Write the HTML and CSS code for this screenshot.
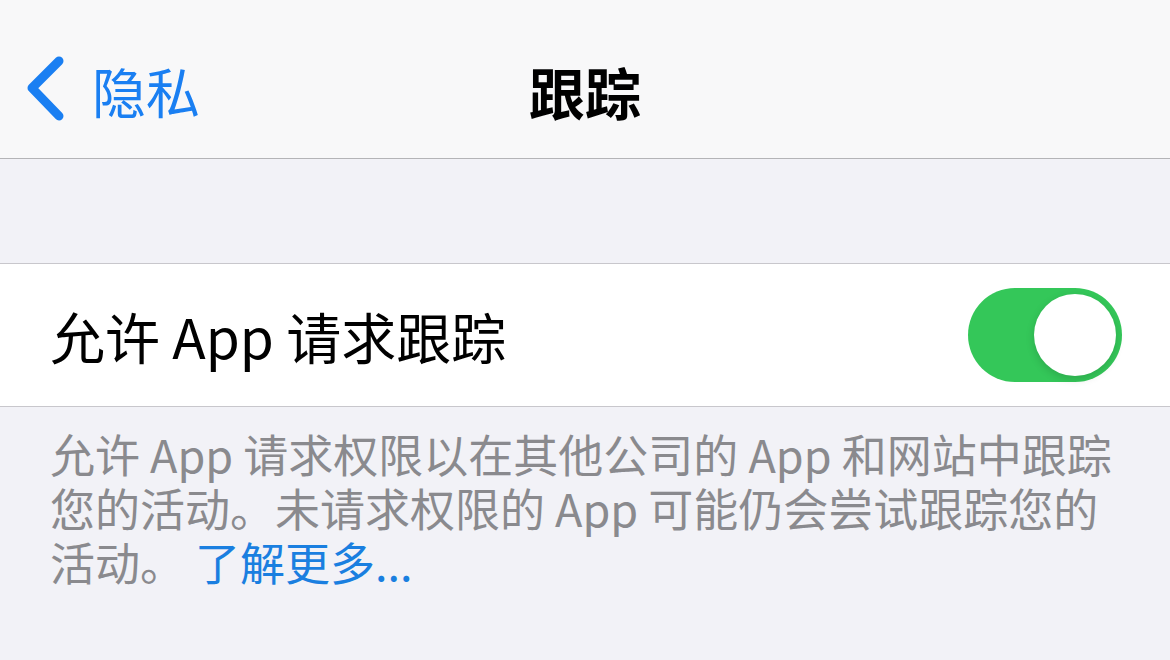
FILE: index.html
```html
<!DOCTYPE html>
<html lang="zh-CN">
<head>
  <meta charset="UTF-8">
  <title>跟踪</title>
  <link rel="stylesheet" href="styles.css">
</head>
<body>

  <!-- Navigation bar -->
  <div class="nav-bar">
    <div class="nav-back">
      <svg class="chevron" width="40" height="70" viewBox="0 0 40 70">
        <path d="M33 6 L6 33 L33 61" fill="none" stroke="#1a7ff2" stroke-width="9" stroke-linecap="round" stroke-linejoin="round"/>
      </svg>
      <span>隐私</span>
    </div>
    <div class="nav-title">跟踪</div>
    <div></div>
  </div>

  <div class="group-gap"></div>

  <!-- Setting row -->
  <div class="setting-row">
    <span class="row-label">允许 App 请求跟踪</span>
    <div class="toggle on">
      <div class="knob"></div>
    </div>
  </div>

  <!-- Footer note -->
  <div class="footer-note">
    允许 App 请求权限以在其他公司的 App 和网站中跟踪<br>
    您的活动。未请求权限的 App 可能仍会尝试跟踪您的<br>
    活动。 <span class="link">了解更多...</span>
  </div>

</body>
</html>
```

FILE: styles.css
```css
* { box-sizing: border-box; margin: 0; padding: 0; }
body {
  font-family: "Noto Sans CJK SC", "Noto Sans", sans-serif;
  background: #f2f2f7;
  width: 1170px;
  height: 660px;
  overflow: hidden;
}

/* nav bar */
.nav-bar {
  height: 159px;
  background: #f8f8f9;
  border-bottom: 1px solid #b4b4b7;
  display: grid;
  grid-template-columns: 1fr auto 1fr;
  align-items: center;
  padding-top: 22px;
}
.nav-back {
  display: flex;
  align-items: center;
  padding-left: 26px;
  color: #1a7ff2;
  font-size: 54px;
  gap: 26px;
}
.chevron { display: block; }
.nav-title {
  font-size: 56px;
  font-weight: 700;
  color: #000;
}

.group-gap {
  height: 104px;
}

/* row */
.setting-row {
  height: 144px;
  background: #fff;
  border-top: 1px solid #c8c7cc;
  border-bottom: 1px solid #c8c7cc;
  display: flex;
  align-items: center;
  justify-content: space-between;
  padding: 0 48px 0 50px;
}
.row-label {
  font-size: 55px;
  color: #000;
}
.toggle {
  width: 154px;
  height: 94px;
  border-radius: 47px;
  background: #e9e9eb;
  padding: 6px;
  display: flex;
}
.toggle.on {
  background: #34c759;
  justify-content: flex-end;
}
.knob {
  width: 82px;
  height: 82px;
  border-radius: 50%;
  background: #fff;
  box-shadow: 0 3px 8px rgba(0,0,0,0.15);
}

/* footer */
.footer-note {
  padding: 20px 50px 0;
  font-size: 45px;
  line-height: 54px;
  color: #8a8a8e;
}
.link {
  color: #1a7fe0;
}
```
